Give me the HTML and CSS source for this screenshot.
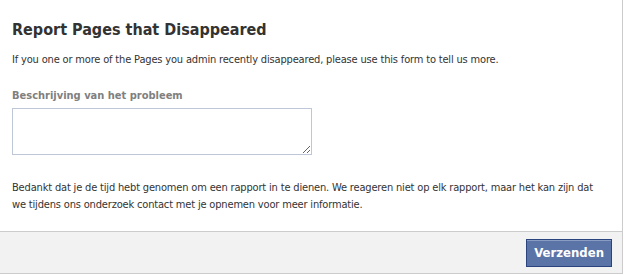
FILE: index.html
```html
<!DOCTYPE html>
<html>
<head>
<meta charset="utf-8">
<link rel="stylesheet" href="styles.css">
</head>
<body>
<div class="dialog">
  <div class="content">
    <h2 class="title">Report Pages that Disappeared</h2>
    <p class="intro">If you one or more of the Pages you admin recently disappeared, please use this form to tell us more.</p>
    <label class="label" for="desc">Beschrijving van het probleem</label>
    <textarea id="desc" class="field"></textarea>
    <p class="thanks">Bedankt dat je de tijd hebt genomen om een rapport in te dienen. We reageren niet op elk rapport, maar het kan zijn dat we tijdens ons onderzoek contact met je opnemen voor meer informatie.</p>
  </div>
  <div class="footer">
    <button class="submit" type="button">Verzenden</button>
  </div>
</div>
</body>
</html>
```
FILE: styles.css
```css
html, body {
  margin: 0;
  padding: 0;
  background: #fff;
}
body {
  font-family: "DejaVu Sans Condensed", "DejaVu Sans", sans-serif;
  font-size: 11px;
  color: #333;
}
.dialog {
  width: 622px;
  height: 274px;
  border-right: 1px solid #ccc;
  display: flex;
  flex-direction: column;
}
.content {
  flex: 1;
  padding: 20px 16px 0 12px;
  display: flex;
  flex-direction: column;
  align-items: flex-start;
}
.title {
  margin: 0;
  font-size: 16px;
  font-weight: bold;
  color: #333;
  line-height: 20px;
}
.intro {
  margin: 13px 0 0 0;
  line-height: 14px;
  letter-spacing: -0.17px;
}
.label {
  margin-top: 22px;
  font-weight: bold;
  color: #808080;
  font-size: 11px;
  line-height: 14px;
}
.field {
  margin: 5px 0 0 0;
  width: 300px;
  height: 47px;
  box-sizing: border-box;
  border: 1px solid #bdc7d8;
  padding: 3px;
  font-family: inherit;
  font-size: 11px;
}
.thanks {
  margin: 24px 0 0 0;
  line-height: 17px;
  letter-spacing: -0.17px;
}
.footer {
  height: 41px;
  background: #f2f2f2;
  border-top: 1px solid #ccc;
  border-bottom: 1px solid #ccc;
  display: flex;
  justify-content: flex-end;
  align-items: center;
  padding: 0 10px;
}
.submit {
  background: #5b74a8;
  border: 1px solid #29447e;
  box-shadow: inset 0 1px 0 #8a9cc2;
  color: #fff;
  font-family: inherit;
  font-weight: bold;
  font-size: 13px;
  height: 28px;
  padding: 0 7px;
}
```
